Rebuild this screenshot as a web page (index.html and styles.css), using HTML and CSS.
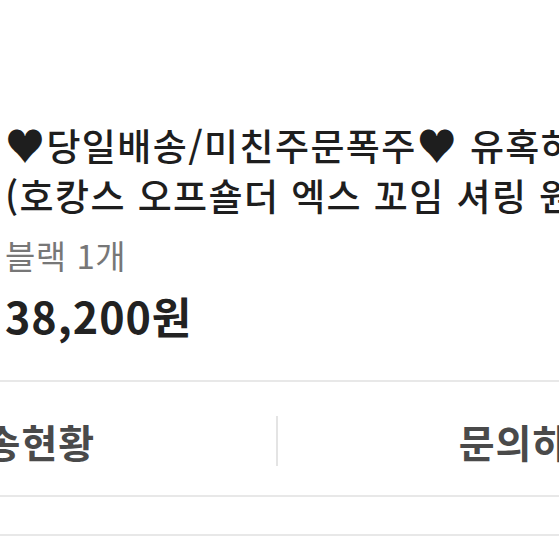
FILE: index.html
```html
<!DOCTYPE html>
<html lang="ko">
<head>
  <meta charset="UTF-8" />
  <meta name="viewport" content="width=device-width, initial-scale=1" />
  <title>주문 상세</title>
  <link rel="stylesheet" href="styles.css">
</head>
<body>

  <!-- 상품 정보 -->
  <div class="item-info">
    <h1 class="item-title"><span class="heart">♥</span>당일배송/미친주문폭주<span class="heart">♥</span> 유혹하는<br>(호캉스 오프숄더 엑스 꼬임 셔링 원피스)</h1>
    <p class="item-option">블랙 1개</p>
    <p class="item-price">38,200원</p>
  </div>

  <!-- 하단 버튼 -->
  <div class="order-actions">
    <button class="action">배송현황</button>
    <span class="action-divider"></span>
    <button class="action">문의하기</button>
  </div>

  <div class="empty-row"></div>

</body>
</html>
```

FILE: styles.css
```css
html, body {
  margin: 0;
  padding: 0;
  background: #fff;
  overflow: hidden;
}
body {
  font-family: "Noto Sans CJK KR", "Noto Sans", sans-serif;
  color: #1e1e1e;
  width: 559px;
}
.item-info {
  padding: 120px 0 0 5px;
  height: 382px;
  box-sizing: border-box;
  border-bottom: 2px solid #e8e8e8;
}
.item-title {
  margin: 0;
  font-size: 37px;
  font-weight: 500;
  line-height: 50px;
  letter-spacing: 1.4px;
  white-space: nowrap;
}
.heart {
  font-size: 40px;
  line-height: 0;
}
.item-option {
  margin: 10px 0 0;
  font-size: 33px;
  line-height: 50px;
  color: #777;
  letter-spacing: 0.5px;
}
.item-price {
  margin: 7px 0 0;
  font-size: 43px;
  font-weight: 700;
  line-height: 56px;
  color: #222;
  letter-spacing: 1px;
}
.order-actions {
  width: 1020px;
  margin-left: -233px;
  height: 115px;
  padding-top: 4px;
  box-sizing: border-box;
  display: flex;
  align-items: center;
  border-bottom: 2px solid #e8e8e8;
}
.action {
  flex: 1;
  background: none;
  border: none;
  padding: 0;
  font-family: inherit;
  font-size: 39px;
  font-weight: 700;
  letter-spacing: 1px;
  color: #4a4a4a;
}
.action-divider {
  width: 2px;
  height: 50px;
  background: #e4e4e4;
}
.empty-row {
  height: 37px;
  border-bottom: 2px solid #e8e8e8;
}
```
